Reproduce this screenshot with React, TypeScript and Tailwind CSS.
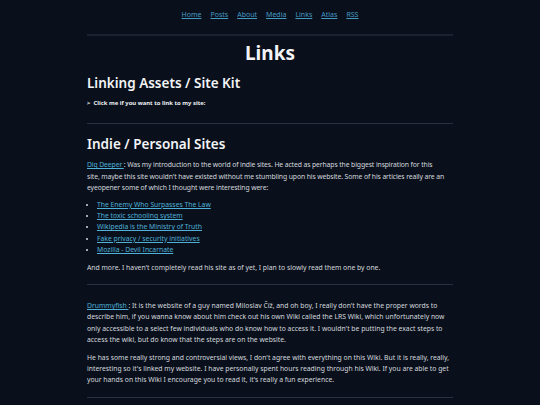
import React from 'react'

const NAV = ['Home', 'Posts', 'About', 'Media', 'Links', 'Atlas', 'RSS']

const DIG_DEEPER = [
  'The Enemy Who Surpasses The Law',
  'The toxic schooling system',
  'Wikipedia is the Ministry of Truth',
  'Fake privacy / security initiatives',
  'Mozilla - Devil Incarnate',
]

function A({ children }: { children: React.ReactNode }) {
  return (
    <a href="#" className="text-[#4fb0d8] underline underline-offset-1">
      {children}
    </a>
  )
}

export default function App() {
  return (
    <div
      className="min-h-[405px] bg-[#09101c] text-[6.8px] leading-[11.2px] text-[#d6d9de]"
      style={{ fontFamily: '"Noto Sans", "Open Sans", sans-serif' }}
    >
      <div className="mx-auto w-[366px]">
        <nav className="flex justify-center gap-[9px] pt-[9px] pb-[14px] text-[7px]">
          {NAV.map((n) => (
            <a key={n} href="#" className="text-[#4699c2] underline underline-offset-1">
              {n}
            </a>
          ))}
        </nav>
        <hr className="border-t-2 border-[#1a2230]" />

        <h1 className="mt-[5px] text-center text-[19px] font-bold leading-[24px] text-[#f3f4f6]">Links</h1>

        <h2 className="mt-[9px] text-[13.5px] font-semibold leading-[18px] text-[#f3f4f6]">
          Linking Assets / Site Kit
        </h2>
        <details className="mt-[6px]">
          <summary className="list-none text-[5.9px] font-bold text-[#eef0f3]">
            &gt;&nbsp; Click me if you want to link to my site:
          </summary>
        </details>
        <hr className="mt-[14px] border-t border-[#283140]" />

        <h2 className="mt-[11px] text-[13.5px] font-semibold leading-[18px] text-[#f3f4f6]">
          Indie / Personal Sites
        </h2>
        <p className="mt-[6px] tracking-[-0.1px]">
          <A>Dig Deeper </A> : Was my introduction to the world of indie sites. He acted as perhaps the biggest
          inspiration for this
          <br />
          site, maybe this site wouldn't have existed without me stumbling upon his website. Some of his articles
          really are an eyeopener some of which I thought were interesting were:
        </p>
        <ul className="mt-[6px] list-disc pl-[10px]">
          {DIG_DEEPER.map((t) => (
            <li key={t}>
              <A>{t}</A>
            </li>
          ))}
        </ul>
        <p className="mt-[7px]">
          And more. I haven't completely read his site as of yet, I plan to slowly read them one by one.
        </p>
        <hr className="mt-[11px] border-t border-[#283140]" />

        <p className="mt-[15px]">
          <A>Drummyfish </A>: It is the website of a guy named Miloslav Číž, and oh boy, I really don't have the
          proper words to describe him, if you wanna know about him check out his own Wiki called the LRS Wiki,
          which unfortunately now only accessible to a select few individuals who do know how to access it. I
          wouldn't be putting the exact steps to access the wiki, but do know that the steps are on the website.
        </p>
        <p className="mt-[7px]">
          He has some really strong and controversial views, I don't agree with everything on this Wiki. But it is
          really, really, interesting so it's linked my website. I have personally spent hours reading through his
          Wiki. If you are able to get your hands on this Wiki I encourage you to read it, it's really a fun
          experience.
        </p>
        <hr className="mt-[11px] border-t border-[#283140]" />
      </div>
    </div>
  )
}
